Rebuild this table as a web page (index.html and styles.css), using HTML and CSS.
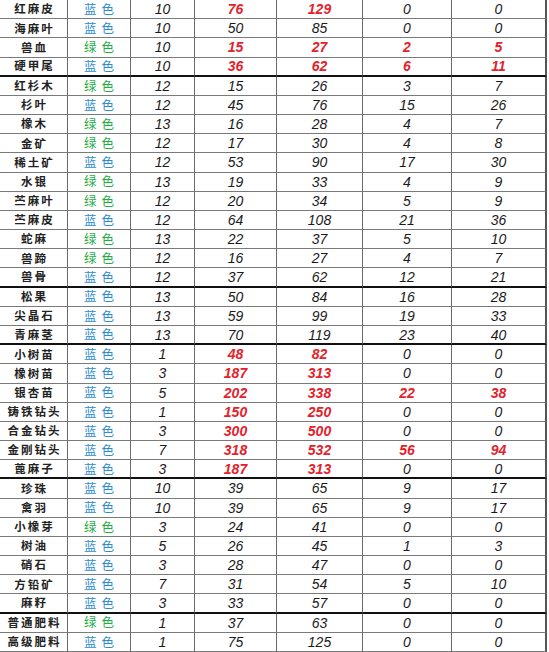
FILE: index.html
```html
<!DOCTYPE html>
<html lang="zh">
<head>
<meta charset="utf-8">
<title>表</title>
<link rel="stylesheet" href="styles.css">
</head>
<body>
<div class="sheet">
<div class="row"><div class="cell name">红麻皮</div><div class="cell blue">蓝色</div><div class="cell">10</div><div class="cell red">76</div><div class="cell red">129</div><div class="cell">0</div><div class="cell">0</div></div>
<div class="row"><div class="cell name">海麻叶</div><div class="cell blue">蓝色</div><div class="cell">10</div><div class="cell">50</div><div class="cell">85</div><div class="cell">0</div><div class="cell">0</div></div>
<div class="row"><div class="cell name">兽血</div><div class="cell green">绿色</div><div class="cell">10</div><div class="cell red">15</div><div class="cell red">27</div><div class="cell red">2</div><div class="cell red">5</div></div>
<div class="row sep"><div class="cell name">硬甲尾</div><div class="cell blue">蓝色</div><div class="cell">10</div><div class="cell red">36</div><div class="cell red">62</div><div class="cell red">6</div><div class="cell red">11</div></div>
<div class="row"><div class="cell name">红杉木</div><div class="cell green">绿色</div><div class="cell">12</div><div class="cell">15</div><div class="cell">26</div><div class="cell">3</div><div class="cell">7</div></div>
<div class="row"><div class="cell name">杉叶</div><div class="cell blue">蓝色</div><div class="cell">12</div><div class="cell">45</div><div class="cell">76</div><div class="cell">15</div><div class="cell">26</div></div>
<div class="row"><div class="cell name">橡木</div><div class="cell green">绿色</div><div class="cell">13</div><div class="cell">16</div><div class="cell">28</div><div class="cell">4</div><div class="cell">7</div></div>
<div class="row"><div class="cell name">金矿</div><div class="cell green">绿色</div><div class="cell">12</div><div class="cell">17</div><div class="cell">30</div><div class="cell">4</div><div class="cell">8</div></div>
<div class="row"><div class="cell name">稀土矿</div><div class="cell blue">蓝色</div><div class="cell">12</div><div class="cell">53</div><div class="cell">90</div><div class="cell">17</div><div class="cell">30</div></div>
<div class="row"><div class="cell name">水银</div><div class="cell green">绿色</div><div class="cell">13</div><div class="cell">19</div><div class="cell">33</div><div class="cell">4</div><div class="cell">9</div></div>
<div class="row"><div class="cell name">苎麻叶</div><div class="cell green">绿色</div><div class="cell">12</div><div class="cell">20</div><div class="cell">34</div><div class="cell">5</div><div class="cell">9</div></div>
<div class="row"><div class="cell name">苎麻皮</div><div class="cell blue">蓝色</div><div class="cell">12</div><div class="cell">64</div><div class="cell">108</div><div class="cell">21</div><div class="cell">36</div></div>
<div class="row"><div class="cell name">蛇麻</div><div class="cell green">绿色</div><div class="cell">13</div><div class="cell">22</div><div class="cell">37</div><div class="cell">5</div><div class="cell">10</div></div>
<div class="row"><div class="cell name">兽蹄</div><div class="cell green">绿色</div><div class="cell">12</div><div class="cell">16</div><div class="cell">27</div><div class="cell">4</div><div class="cell">7</div></div>
<div class="row sep"><div class="cell name">兽骨</div><div class="cell blue">蓝色</div><div class="cell">12</div><div class="cell">37</div><div class="cell">62</div><div class="cell">12</div><div class="cell">21</div></div>
<div class="row"><div class="cell name">松果</div><div class="cell blue">蓝色</div><div class="cell">13</div><div class="cell">50</div><div class="cell">84</div><div class="cell">16</div><div class="cell">28</div></div>
<div class="row"><div class="cell name">尖晶石</div><div class="cell blue">蓝色</div><div class="cell">13</div><div class="cell">59</div><div class="cell">99</div><div class="cell">19</div><div class="cell">33</div></div>
<div class="row sep"><div class="cell name">青麻茎</div><div class="cell blue">蓝色</div><div class="cell">13</div><div class="cell">70</div><div class="cell">119</div><div class="cell">23</div><div class="cell">40</div></div>
<div class="row"><div class="cell name">小树苗</div><div class="cell blue">蓝色</div><div class="cell">1</div><div class="cell red">48</div><div class="cell red">82</div><div class="cell">0</div><div class="cell">0</div></div>
<div class="row"><div class="cell name">橡树苗</div><div class="cell blue">蓝色</div><div class="cell">3</div><div class="cell red">187</div><div class="cell red">313</div><div class="cell">0</div><div class="cell">0</div></div>
<div class="row"><div class="cell name">银杏苗</div><div class="cell blue">蓝色</div><div class="cell">5</div><div class="cell red">202</div><div class="cell red">338</div><div class="cell red">22</div><div class="cell red">38</div></div>
<div class="row"><div class="cell name">铸铁钻头</div><div class="cell blue">蓝色</div><div class="cell">1</div><div class="cell red">150</div><div class="cell red">250</div><div class="cell">0</div><div class="cell">0</div></div>
<div class="row"><div class="cell name">合金钻头</div><div class="cell blue">蓝色</div><div class="cell">3</div><div class="cell red">300</div><div class="cell red">500</div><div class="cell">0</div><div class="cell">0</div></div>
<div class="row"><div class="cell name">金刚钻头</div><div class="cell blue">蓝色</div><div class="cell">7</div><div class="cell red">318</div><div class="cell red">532</div><div class="cell red">56</div><div class="cell red">94</div></div>
<div class="row sep"><div class="cell name">蓖麻子</div><div class="cell blue">蓝色</div><div class="cell">3</div><div class="cell red">187</div><div class="cell red">313</div><div class="cell">0</div><div class="cell">0</div></div>
<div class="row"><div class="cell name">珍珠</div><div class="cell blue">蓝色</div><div class="cell">10</div><div class="cell">39</div><div class="cell">65</div><div class="cell">9</div><div class="cell">17</div></div>
<div class="row"><div class="cell name">禽羽</div><div class="cell blue">蓝色</div><div class="cell">10</div><div class="cell">39</div><div class="cell">65</div><div class="cell">9</div><div class="cell">17</div></div>
<div class="row"><div class="cell name">小橡芽</div><div class="cell green">绿色</div><div class="cell">3</div><div class="cell">24</div><div class="cell">41</div><div class="cell">0</div><div class="cell">0</div></div>
<div class="row"><div class="cell name">树油</div><div class="cell blue">蓝色</div><div class="cell">5</div><div class="cell">26</div><div class="cell">45</div><div class="cell">1</div><div class="cell">3</div></div>
<div class="row"><div class="cell name">硝石</div><div class="cell blue">蓝色</div><div class="cell">3</div><div class="cell">28</div><div class="cell">47</div><div class="cell">0</div><div class="cell">0</div></div>
<div class="row"><div class="cell name">方铅矿</div><div class="cell blue">蓝色</div><div class="cell">7</div><div class="cell">31</div><div class="cell">54</div><div class="cell">5</div><div class="cell">10</div></div>
<div class="row sep"><div class="cell name">麻籽</div><div class="cell blue">蓝色</div><div class="cell">3</div><div class="cell">33</div><div class="cell">57</div><div class="cell">0</div><div class="cell">0</div></div>
<div class="row"><div class="cell name">普通肥料</div><div class="cell green">绿色</div><div class="cell">1</div><div class="cell">37</div><div class="cell">63</div><div class="cell">0</div><div class="cell">0</div></div>
<div class="row last"><div class="cell name">高级肥料</div><div class="cell blue">蓝色</div><div class="cell">1</div><div class="cell">75</div><div class="cell">125</div><div class="cell">0</div><div class="cell">0</div></div>
</div>
</body>
</html>
```

FILE: styles.css
```css
html, body {
  margin: 0;
  padding: 0;
  background: #ffffff;
}

.sheet {
  width: 549px;
  height: 652px;
  display: grid;
  grid-template-columns: 68px 63px 64px 82px 86px 89px 97px;
  grid-template-rows: repeat(34, 1fr);
  font-family: "Liberation Sans", "Noto Sans CJK SC", sans-serif;
  font-size: 14px;
  color: #1a1a1a;
  overflow: hidden;
}

.row {
  display: contents;
}

.cell {
  box-sizing: border-box;
  display: flex;
  align-items: center;
  justify-content: center;
  min-height: 0;
  border-right: 1px solid #6a6a6a;
  border-bottom: 1px solid #7a7a7a;
  white-space: nowrap;
  font-style: italic;
  line-height: 1;
}

.row .cell:last-child {
  border-right: 2px solid #555555;
  margin-right: 2px;
}

.row.sep .cell {
  border-bottom: 2px solid #111111;
}

.row.last .cell {
  border-bottom: 1px solid #7a7a7a;
}

.name {
  font-family: "Noto Sans CJK SC", sans-serif;
  font-size: 11.5px;
  font-weight: 700;
  font-style: normal;
  letter-spacing: 2px;
  text-indent: 2px;
  color: #222222;
}

.blue, .green {
  font-family: "Noto Sans CJK SC", sans-serif;
  font-size: 12.5px;
  font-style: normal;
  letter-spacing: 5px;
  text-indent: 5px;
}

.blue { color: #2f8ccf; }
.green { color: #1fae45; }

.red {
  color: #e3222b;
  font-weight: 700;
}
```
